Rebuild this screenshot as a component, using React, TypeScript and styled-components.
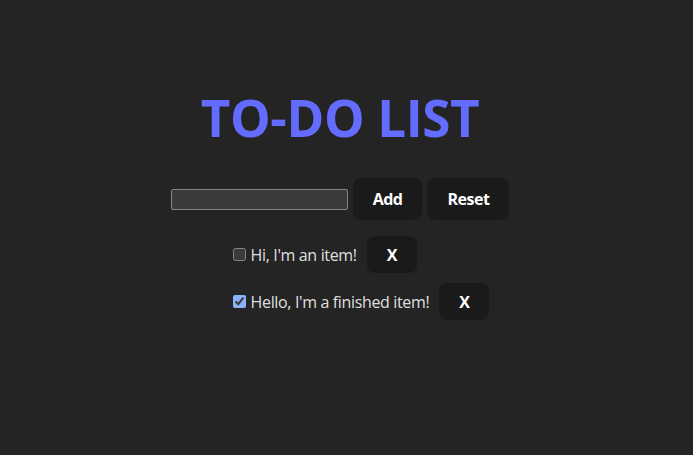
import React, { useState } from "react";
import styled, { createGlobalStyle } from "styled-components";

const Global = createGlobalStyle`
  html, body {
    margin: 0;
    padding: 0;
    background: #242424;
    color-scheme: dark;
  }
  body {
    font-family: "Open Sans", "Noto Sans", sans-serif;
    color: rgba(255, 255, 255, 0.87);
    min-height: 100vh;
  }
`;

const Page = styled.main`
  display: flex;
  flex-direction: column;
  align-items: center;
  padding: 89px 13px 0 0;
  min-height: 100vh;
  box-sizing: border-box;
`;

const Title = styled.h1`
  margin: 0;
  font-size: 51.2px;
  line-height: 1.1;
  font-weight: 700;
  letter-spacing: -0.4px;
  color: #646cff;
`;

const FormRow = styled.div`
  display: flex;
  align-items: center;
  gap: 5px;
  margin-top: 33px;
`;

const TextInput = styled.input`
  box-sizing: border-box;
  width: 177px;
  height: 21px;
  background: #3b3b3b;
  border: 1px solid #858585;
  border-radius: 2px;
  color: #fff;
  padding: 1px 2px;
  font-size: 13px;
  outline: none;
`;

const Button = styled.button<{ $small?: boolean }>`
  box-sizing: border-box;
  height: ${(p) => (p.$small ? 37 : 42)}px;
  padding: 0 19px;
  min-width: ${(p) => (p.$small ? 50 : 0)}px;
  border-radius: 8px;
  border: 1px solid transparent;
  background: #1a1a1a;
  color: #fff;
  font-family: inherit;
  font-size: 16px;
  font-weight: 700;
  letter-spacing: -0.5px;
  cursor: pointer;
`;

const List = styled.ul`
  list-style: none;
  margin: 16px 0 0;
  padding: 0 0 0 42px;
  display: flex;
  flex-direction: column;
  align-items: flex-start;
  gap: 10px;
`;

const Item = styled.li`
  display: flex;
  align-items: center;
  gap: 10px;
`;

const Label = styled.label`
  display: flex;
  align-items: center;
  font-size: 16px;
  letter-spacing: -0.35px;
`;

const Check = styled.input`
  width: 13px;
  height: 13px;
  margin: 0 5px 0 0;
  accent-color: #8ab4f8;
`;

const initial = [
  { id: 1, text: "Hi, I'm an item!", done: false },
  { id: 2, text: "Hello, I'm a finished item!", done: true },
];

export default function App() {
  const [items, setItems] = useState(initial);
  const [value, setValue] = useState("");

  return (
    <>
      <Global />
      <Page>
        <Title>TO-DO LIST</Title>
        <FormRow>
          <TextInput value={value} onChange={(e) => setValue(e.target.value)} />
          <Button
            onClick={() => {
              if (!value.trim()) return;
              setItems([...items, { id: Date.now(), text: value, done: false }]);
              setValue("");
            }}
          >
            Add
          </Button>
          <Button onClick={() => setItems(initial)}>Reset</Button>
        </FormRow>
        <List>
          {items.map((it) => (
            <Item key={it.id}>
              <Label>
                <Check
                  type="checkbox"
                  checked={it.done}
                  onChange={() =>
                    setItems(items.map((x) => (x.id === it.id ? { ...x, done: !x.done } : x)))
                  }
                />
                {it.text}
              </Label>
              <Button $small onClick={() => setItems(items.filter((x) => x.id !== it.id))}>
                X
              </Button>
            </Item>
          ))}
        </List>
      </Page>
    </>
  );
}
